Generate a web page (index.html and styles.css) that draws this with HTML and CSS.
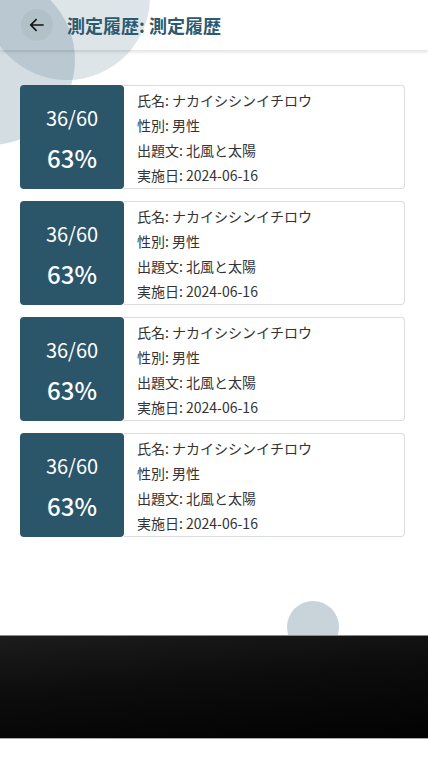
FILE: index.html
```html
<!DOCTYPE html>
<html lang="ja">
<head>
<meta charset="utf-8">
<title>測定履歴</title>
<link rel="stylesheet" href="styles.css">
</head>
<body>
<div class="deco deco-a"></div>
<div class="deco deco-b"></div>
<div class="deco deco-c"></div>
<header class="topbar">
  <button class="back" aria-label="戻る">
    <svg width="20" height="20" viewBox="0 0 24 24"><path d="M20 12H4.5M11.5 5l-7 7 7 7" fill="none" stroke="#111" stroke-width="1.9"/></svg>
  </button>
  <h1 class="title">測定履歴: 測定履歴</h1>
</header>
<main class="list">
  <div class="card">
    <div class="score"><span class="frac">36/60</span><span class="pct">63%</span></div>
    <div class="info"><p>氏名: ナカイシシンイチロウ</p><p>性別: 男性</p><p>出題文: 北風と太陽</p><p>実施日: 2024-06-16</p></div>
  </div>
  <div class="card">
    <div class="score"><span class="frac">36/60</span><span class="pct">63%</span></div>
    <div class="info"><p>氏名: ナカイシシンイチロウ</p><p>性別: 男性</p><p>出題文: 北風と太陽</p><p>実施日: 2024-06-16</p></div>
  </div>
  <div class="card">
    <div class="score"><span class="frac">36/60</span><span class="pct">63%</span></div>
    <div class="info"><p>氏名: ナカイシシンイチロウ</p><p>性別: 男性</p><p>出題文: 北風と太陽</p><p>実施日: 2024-06-16</p></div>
  </div>
  <div class="card">
    <div class="score"><span class="frac">36/60</span><span class="pct">63%</span></div>
    <div class="info"><p>氏名: ナカイシシンイチロウ</p><p>性別: 男性</p><p>出題文: 北風と太陽</p><p>実施日: 2024-06-16</p></div>
  </div>
</main>
<footer class="blackbar"></footer>
</body>
</html>
```
FILE: styles.css
```css
* { box-sizing: border-box; }
html, body { margin: 0; padding: 0; }
body {
  width: 428px;
  height: 762px;
  overflow: hidden;
  position: relative;
  background: #fff;
  font-family: "Noto Sans CJK JP", "Noto Sans", sans-serif;
  display: flex;
  flex-direction: column;
}
.deco {
  position: absolute;
  border-radius: 50%;
  z-index: 0;
}
.deco-a {
  left: -16px; top: -86px;
  width: 166px; height: 166px;
  background: rgba(60, 100, 125, 0.17);
}
.deco-b {
  left: -95px; top: -25px;
  width: 170px; height: 170px;
  background: rgba(60, 100, 125, 0.22);
}
.deco-c {
  left: 287px; top: 601px;
  width: 52px; height: 52px;
  background: #c8d3da;
}
.topbar {
  position: relative;
  z-index: 1;
  height: 50px;
  display: flex;
  align-items: center;
  padding-left: 21px;
  gap: 14px;
  box-shadow: 0 2px 3px rgba(0,0,0,0.12);
  flex-shrink: 0;
}
.back {
  width: 32px; height: 32px;
  border-radius: 50%;
  border: none;
  padding: 0;
  background: rgba(0,0,0,0.04);
  display: flex;
  align-items: center;
  justify-content: center;
}
.title {
  margin: 0;
  font-size: 18px;
  font-weight: 700;
  color: #2c5a70;
  letter-spacing: 0;
}
.list {
  position: relative;
  z-index: 1;
  padding: 35px 23px 0 20px;
  display: flex;
  flex-direction: column;
  gap: 12px;
}
.card {
  display: flex;
  height: 104px;
}
.score {
  width: 104px;
  flex-shrink: 0;
  background: #2b5569;
  border-radius: 4px;
  color: #fff;
  display: flex;
  flex-direction: column;
  align-items: center;
  justify-content: center;
  gap: 10px;
  padding-top: 4px;
}
.frac { font-size: 20px; line-height: 28px; }
.pct { font-size: 24px; line-height: 32px; font-weight: 500; }
.info {
  flex: 1;
  border: 1px solid #dcdcdc;
  border-left: none;
  border-radius: 0 4px 4px 0;
  background: #fff;
  padding: 2px 13px 0 13px;
  display: flex;
  flex-direction: column;
}
.info p {
  margin: 0;
  font-size: 14px;
  line-height: 25px;
  color: #333;
}
.blackbar {
  position: relative;
  z-index: 1;
  margin-top: auto;
  margin-bottom: 23px;
  height: 104px;
  border-top: 1px solid #8a8a8a;
  border-bottom: 1px solid #aaa;
  background: linear-gradient(175deg, #1c1c1c 0%, #0c0c0c 45%, #020202 100%);
  flex-shrink: 0;
}
```
